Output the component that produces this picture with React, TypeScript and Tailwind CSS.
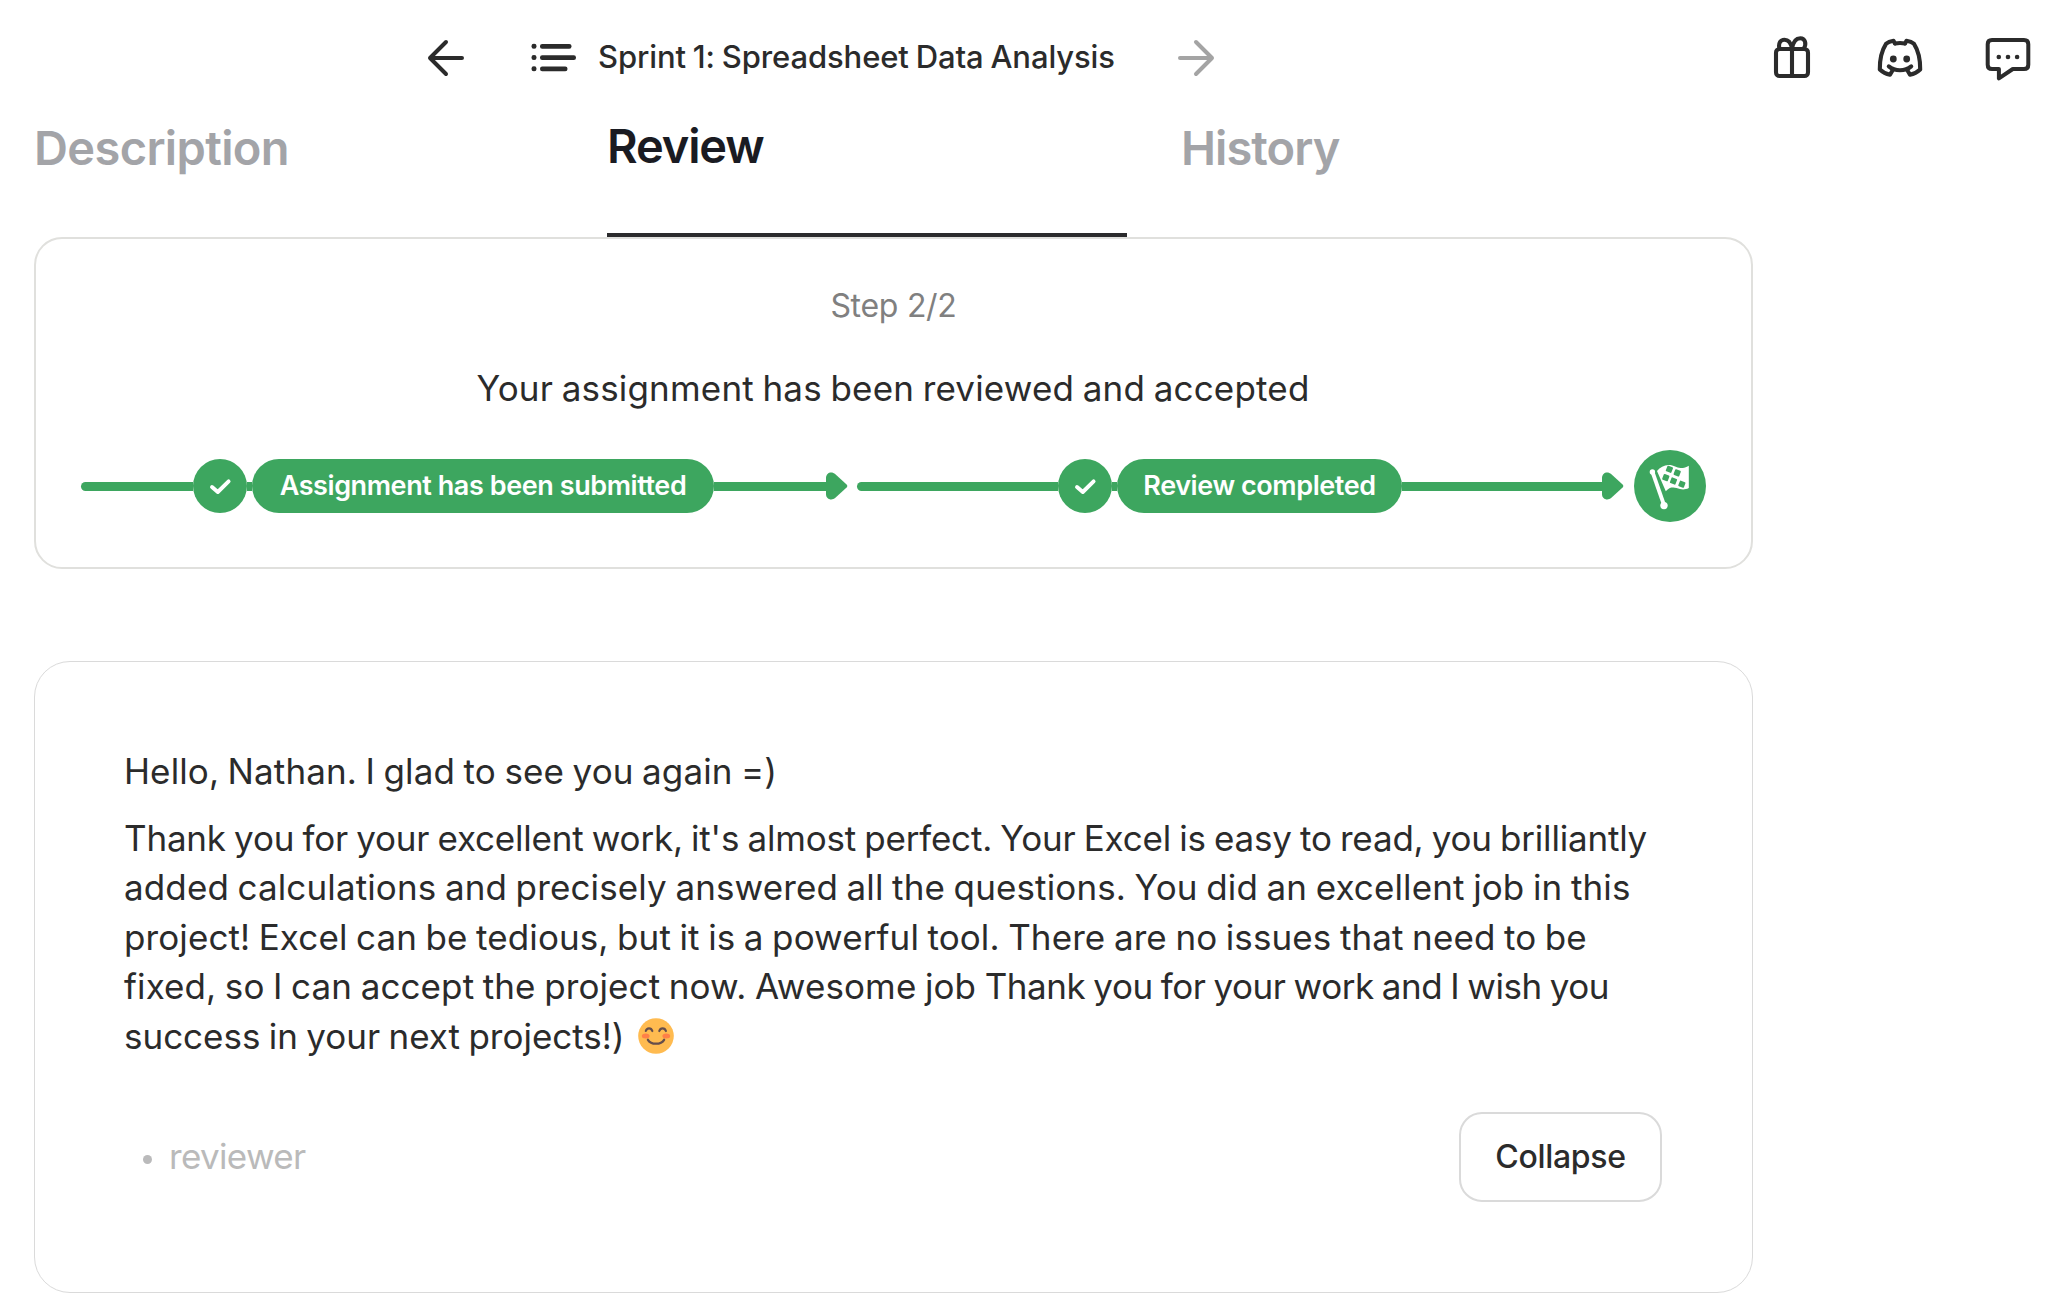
import type { ReactNode } from 'react'

function ArrowIcon({ flipped = false }: { flipped?: boolean }) {
  return (
    <svg
      width="40"
      height="40"
      viewBox="0 0 40 40"
      fill="none"
      stroke="currentColor"
      strokeWidth="4"
      strokeLinecap="round"
      strokeLinejoin="round"
      className={flipped ? 'shrink-0 -scale-x-100' : 'shrink-0'}
    >
      <path d="M20 4 L4 20 L20 36 M4 20 H36" />
    </svg>
  )
}

function ListIcon() {
  return (
    <svg width="46" height="32" viewBox="0 0 46 32" fill="currentColor" className="shrink-0">
      <rect x="0.5" y="2.7" width="5" height="5" rx="2.3" />
      <rect x="9" y="2.9" width="31.5" height="4.8" rx="2.2" />
      <rect x="0.5" y="14" width="5" height="5" rx="2.3" />
      <rect x="9" y="14.2" width="36" height="4.8" rx="2.2" />
      <rect x="0.5" y="25.3" width="5" height="5" rx="2.3" />
      <rect x="9" y="25.5" width="27.5" height="4.8" rx="2.2" />
    </svg>
  )
}

function GiftIcon() {
  return (
    <svg width="40" height="46" viewBox="0 0 40 46" fill="none" stroke="currentColor" strokeWidth="4.1" strokeLinejoin="round">
      <rect x="4" y="15" width="32" height="27" rx="3.6" />
      <path d="M20 14 V42" />
      <path d="M20 14.5 C19 9.5 16.4 5.8 12.5 5.8 C8.2 5.8 6.2 9.5 7.4 14.5" />
      <path d="M20 14.5 C21 8.5 24 4.2 28.3 4.2 C33.2 4.2 34.8 9.6 31.8 14.5" />
    </svg>
  )
}

function DiscordIcon() {
  return (
    <svg width="48" height="44" viewBox="0 0 48 44" fill="none" stroke="currentColor" strokeWidth="4.1" strokeLinecap="round" strokeLinejoin="round">
      <path d="M12.8 30.4 C19 35.6 29 35.6 35.2 30.4" />
      <path d="M19 7.4 L17.5 4.8 C14.4 5.2 11.6 6.4 10 7.8 C6 14 3.7 22 3.8 33.4 C6.8 36.2 10.4 38 14 38.7 L16.8 34" />
      <path d="M29 7.4 L30.5 4.8 C33.6 5.2 36.4 6.4 38 7.8 C42 14 44.3 22 44.2 33.4 C41.2 36.2 37.6 38 34 38.7 L31.2 34" />
      <path d="M19 7.4 C22 6.9 26 6.9 29 7.4" />
      <circle cx="17.3" cy="23" r="3.4" fill="currentColor" stroke="none" />
      <circle cx="30.7" cy="23" r="3.4" fill="currentColor" stroke="none" />
    </svg>
  )
}

function ChatIcon() {
  return (
    <svg width="50" height="48" viewBox="0 0 50 48" fill="none" stroke="currentColor" strokeWidth="4" strokeLinejoin="round">
      <path d="M8 5 H40 Q44.3 5 44.3 9.3 V29.7 Q44.3 34 40 34 H28.8 L14.9 43.4 V34 H8 Q3.7 34 3.7 29.7 V9.3 Q3.7 5 8 5 Z" />
      <g fill="currentColor" stroke="none">
        <circle cx="14.8" cy="22" r="2.3" />
        <circle cx="24" cy="22" r="2.3" />
        <circle cx="33.1" cy="22" r="2.3" />
      </g>
    </svg>
  )
}

function ArrowHead() {
  return (
    <svg width="22" height="28" viewBox="0 0 22 28" fill="currentColor" className="shrink-0">
      <path d="M0 6 C0 0.8 5.5 -1.2 9.4 2.2 L20.6 12.6 Q22 14 20.6 15.4 L9.4 25.8 C5.5 29.2 0 27.2 0 22 Z" />
    </svg>
  )
}

function FlagIcon() {
  const squares = [
    [35.4, 19.3],
    [31.8, 27.6],
    [43.2, 22.9],
    [39.5, 31],
    [47.9, 34.2],
  ]
  return (
    <svg width="72" height="72" viewBox="0 0 72 72" fill="#ffffff">
      <path d="M18.5 22 L30.2 55.5" stroke="#ffffff" strokeWidth="3.8" />
      <circle cx="18.4" cy="22" r="2.7" />
      <circle cx="30" cy="55.6" r="3.7" />
      <path d="M23 21 C26 17.5 30 15.1 34.5 15 C40 14.9 42.5 17.8 46.5 18 C49.5 18.1 52.3 17.2 54.8 15.7 V38 C51.8 39.6 48.6 39.8 46 39 C42.8 38 40.4 36.9 37.4 37.6 C35.2 38.1 33.4 39.6 31.8 41.2 Z" />
      <g fill="#3da65f">
        {squares.map(([x, y]) => (
          <rect key={x} x={x - 3} y={y - 3} width="6" height="6" rx="0.9" transform={`rotate(21 ${x} ${y})`} />
        ))}
      </g>
    </svg>
  )
}

function SmileEmoji() {
  return (
    <svg width="36" height="36" viewBox="0 0 36 36" className="ml-[13px] shrink-0" fill="none" stroke="#664e4b" strokeLinecap="round">
      <circle cx="18" cy="18" r="17.8" fill="#ffbb50" stroke="none" />
      <ellipse cx="7.7" cy="18" rx="3.9" ry="2.5" fill="#ff8047" stroke="none" />
      <ellipse cx="28.3" cy="18" rx="3.9" ry="2.5" fill="#ff8047" stroke="none" />
      <path d="M7.8 13 C8.8 9.4 13.2 9.4 14.3 13 M21.3 13 C22.4 9.4 26.8 9.4 27.9 13" strokeWidth="2.2" />
      <path d="M9.9 21.8 C13 27 23 27 26.1 21.8" strokeWidth="2.3" />
    </svg>
  )
}

function Check() {
  return (
    <span className="flex size-[54px] shrink-0 rounded-full bg-[#3da65f]">
      <svg width="54" height="54" viewBox="0 0 54 54" fill="none" stroke="#ffffff" strokeWidth="3.9" strokeLinecap="round" strokeLinejoin="round">
        <path d="M19 28 L24.8 33 L35.6 22.4" />
      </svg>
    </span>
  )
}

function Segment({ lead, pill, children }: { lead: string; pill: string; children: ReactNode }) {
  return (
    <div className="flex flex-1 items-center text-[#3da65f]">
      <span className={`h-[9px] shrink-0 rounded-l-full bg-[#3da65f] ${lead}`} />
      <Check />
      <span className="h-[9px] w-[5px] shrink-0 bg-[#3da65f]" />
      <span
        className={`flex h-[54px] shrink-0 items-center justify-center rounded-full bg-[#3da65f] pb-[2px] text-[27px] leading-none font-semibold tracking-[-0.0155em] whitespace-nowrap text-white ${pill}`}
      >
        {children}
      </span>
      <span className="h-[9px] flex-1 bg-[#3da65f]" />
      <ArrowHead />
    </div>
  )
}

export default function App() {
  return (
    <div className="h-[1315px] w-[2071px] overflow-hidden bg-white font-['Inter','Liberation_Sans',sans-serif] text-[#2b2b2b]">
      <header className="flex h-[114px] items-center pr-[37px] pl-[426px]">
        <button className="flex pt-0.5">
          <ArrowIcon />
        </button>
        <div className="ml-[65px] flex items-center">
          <ListIcon />
          <h1 className="ml-[21px] w-[517px] text-[31px] leading-[40px] font-medium tracking-[-0.0035em] whitespace-nowrap [word-spacing:-0.04em]">
            Sprint 1: Spreadsheet Data Analysis
          </h1>
        </div>
        <button className="ml-[61px] flex pt-0.5 text-[#a4a4a4]">
          <ArrowIcon flipped />
        </button>
        <nav className="ml-auto flex items-center">
          <GiftIcon />
          <span className="ml-[64px] pt-0.5">
            <DiscordIcon />
          </span>
          <span className="ml-[60px] pt-1">
            <ChatIcon />
          </span>
        </nav>
      </header>

      <main className="ml-[34px] w-[1719px]">
        <div className="grid h-[123px] grid-cols-3 text-[47px] font-semibold text-[#a3a4a8]">
          <div className="leading-[68px] tracking-[-0.0135em]">Description</div>
          <div className="mr-[53px] border-b-4 border-[#2b2b2d] leading-[64px] tracking-[-0.024em] text-[#1a1b22]">Review</div>
          <div className="pl-px leading-[68px] tracking-[-0.02em]">History</div>
        </div>

        <section className="flex h-[332px] flex-col rounded-[28px] border-2 border-[#e0e0dd] px-[45px] pt-[46px]">
          <p className="text-center text-[32px] leading-[42px] tracking-[-0.0089em] text-[#808080]">Step 2/2</p>
          <p className="mt-[34px] pr-px text-center text-[35px] leading-[54px] tracking-[0.005em] [word-spacing:-0.04em]">
            Your assignment has been reviewed and accepted
          </p>
          <div className="mt-[35px] flex items-center gap-[9px]">
            <Segment lead="w-[112px]" pill="w-[462px]">
              Assignment has been submitted
            </Segment>
            <Segment lead="w-[201px]" pill="w-[285px]">
              Review completed
            </Segment>
            <span className="ml-px size-[72px] shrink-0 rounded-full bg-[#3da65f]">
              <FlagIcon />
            </span>
          </div>
        </section>

        <section className="mt-[92px] h-[632px] rounded-[36px] border border-[#dadada] pt-[84px] pr-[90px] pl-[89px]">
          <p className="text-[35px] leading-[50px] tracking-[0.003em] whitespace-nowrap [word-spacing:-0.04em]">
            Hello, Nathan. I glad to see you again =)
          </p>
          <p className="mt-[17.5px] text-[35px] leading-[49.5px] whitespace-nowrap [word-spacing:-0.04em]">
            <span className="block tracking-[-0.0056em]">
              Thank you for your excellent work, it's almost perfect. Your Excel is easy to read, you brilliantly
            </span>
            <span className="block tracking-[0.0035em]">
              added calculations and precisely answered all the questions. You did an excellent job in this
            </span>
            <span className="block tracking-[0.0028em]">
              project! Excel can be tedious, but it is a powerful tool. There are no issues that need to be
            </span>
            <span className="block tracking-[-0.0125em]">
              <span className="tracking-[0.003em]">fixed, so I can accept the project now. Awesome job </span>
              Thank you for your work and I wish you
            </span>
            <span className="flex items-center tracking-[-0.0005em]">
              success in your next projects!)
              <SmileEmoji />
            </span>
          </p>
          <div className="mt-[51px] flex items-center justify-between">
            <div className="flex items-center pl-[19px] text-[35px] leading-[50px] tracking-[-0.019em] text-[#bababa]">
              <span className="mt-[5px] size-[9px] rounded-full bg-[#bababb]" />
              <span className="-mt-[2px] ml-[17px]">reviewer</span>
            </div>
            <button className="h-[90px] w-[203px] rounded-[23px] border-2 border-[#dadada] pb-px text-[32px] leading-none font-medium tracking-[-0.0094em]">
              Collapse
            </button>
          </div>
        </section>
      </main>
    </div>
  )
}
